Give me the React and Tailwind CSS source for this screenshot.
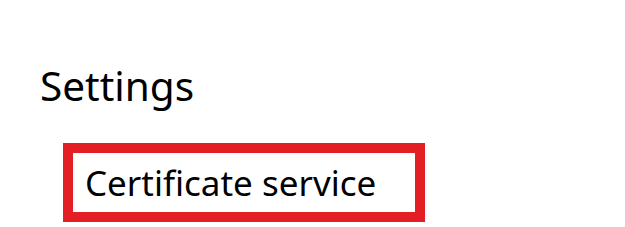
export default function App() {
  return (
    <div className="w-[625px] h-[227px] bg-white text-black overflow-hidden" style={{ fontFamily: '"Noto Sans", sans-serif' }}>
      <h1 className="pl-[40px] pt-[61px] text-[40.5px] leading-[50px] font-normal">Settings</h1>
      <div className="ml-[63px] mt-[32px] w-[362px] h-[79px] border-[10px] border-[#e31e24] flex items-center pl-[12px]">
        <span className="text-[35px] leading-[44px]">Certificate service</span>
      </div>
    </div>
  );
}
